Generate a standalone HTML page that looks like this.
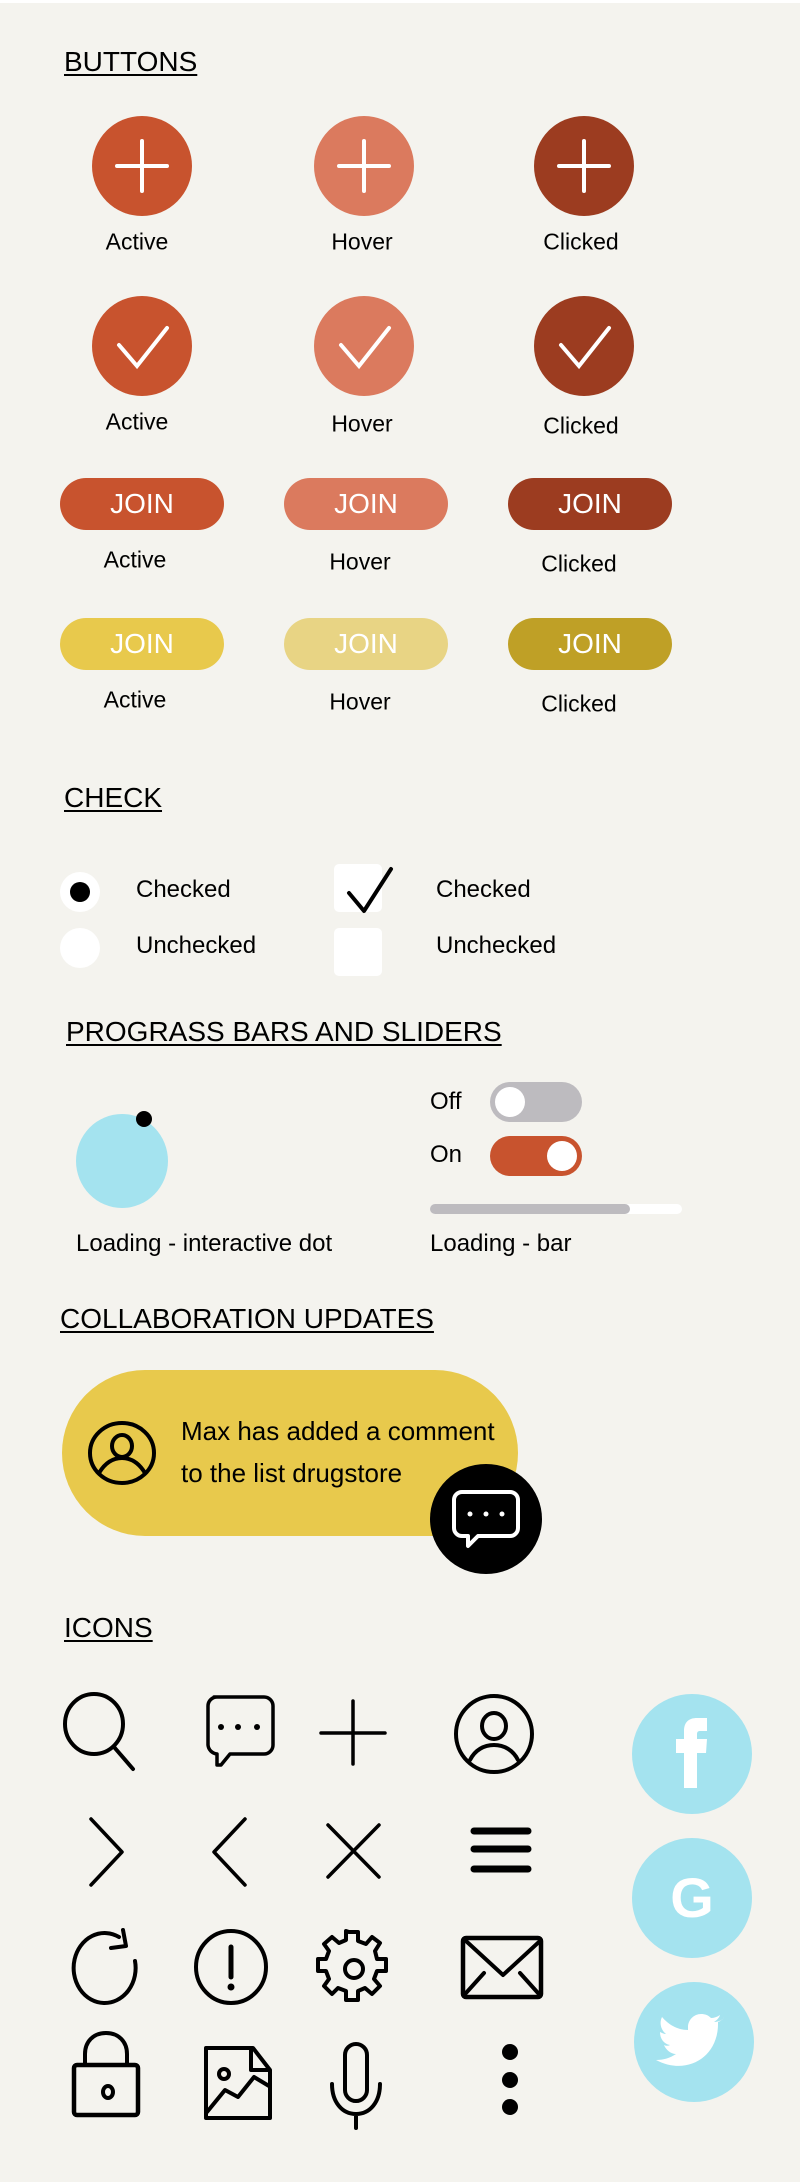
<!DOCTYPE html>
<html><head><meta charset="utf-8"><style>
*{margin:0;padding:0;box-sizing:border-box}
body{width:800px;height:2182px;background:#f4f3ee;position:relative;overflow:hidden;font-family:"Liberation Sans",Arial,sans-serif;color:#000}
.a{position:absolute}
.t{position:absolute;white-space:nowrap;line-height:1;transform:translate(-50%,-50%);font-size:23px}
.l{position:absolute;white-space:nowrap;line-height:1;transform:translateY(-50%);font-size:24px}
.h{position:absolute;white-space:nowrap;line-height:1;font-size:28px;text-decoration:underline;text-decoration-thickness:2px;text-underline-offset:3px}
.p{position:absolute;width:164px;height:52px;border-radius:26px;color:#fff;font-size:28px;display:flex;align-items:center;justify-content:center}
</style></head><body>
<div class="a" style="left:0;top:0;width:800px;height:3px;background:#fff"></div>

<div class="h" style="left:64px;top:48px">BUTTONS</div>

<svg class="a" style="left:0;top:0" width="800" height="420">
<g stroke="#fff" stroke-width="4" stroke-linecap="round" fill="none">
<circle cx="142" cy="166" r="50" fill="#c8532e" stroke="none"/>
<circle cx="364" cy="166" r="50" fill="#db7a5e" stroke="none"/>
<circle cx="584" cy="166" r="50" fill="#9c3c20" stroke="none"/>
<path d="M117 166h50M142 141v50M339 166h50M364 141v50M559 166h50M584 141v50"/>
<circle cx="142" cy="346" r="50" fill="#c8532e" stroke="none"/>
<circle cx="364" cy="346" r="50" fill="#db7a5e" stroke="none"/>
<circle cx="584" cy="346" r="50" fill="#9c3c20" stroke="none"/>
<path d="M119 345l18 21 30-38M341 345l18 21 30-38M561 345l18 21 30-38"/>
</g></svg>
<div class="t" style="left:137px;top:242px">Active</div>
<div class="t" style="left:362px;top:242px">Hover</div>
<div class="t" style="left:581px;top:242px">Clicked</div>
<div class="t" style="left:137px;top:422px">Active</div>
<div class="t" style="left:362px;top:424px">Hover</div>
<div class="t" style="left:581px;top:426px">Clicked</div>

<div class="p" style="left:60px;top:478px;background:#c8532e">JOIN</div>
<div class="p" style="left:284px;top:478px;background:#db7a5e">JOIN</div>
<div class="p" style="left:508px;top:478px;background:#9c3c20">JOIN</div>
<div class="t" style="left:135px;top:560px">Active</div>
<div class="t" style="left:360px;top:562px">Hover</div>
<div class="t" style="left:579px;top:564px">Clicked</div>
<div class="p" style="left:60px;top:618px;background:#e8c94c">JOIN</div>
<div class="p" style="left:284px;top:618px;background:#e8d484">JOIN</div>
<div class="p" style="left:508px;top:618px;background:#bfa026">JOIN</div>
<div class="t" style="left:135px;top:700px">Active</div>
<div class="t" style="left:360px;top:702px">Hover</div>
<div class="t" style="left:579px;top:704px">Clicked</div>

<div class="h" style="left:64px;top:784px">CHECK</div>
<div class="a" style="left:60px;top:872px;width:40px;height:40px;border-radius:50%;background:#fff"></div>
<div class="a" style="left:70px;top:882px;width:20px;height:20px;border-radius:50%;background:#000"></div>
<div class="a" style="left:60px;top:928px;width:40px;height:40px;border-radius:50%;background:#fff"></div>
<div class="l" style="left:136px;top:890px">Checked</div>
<div class="l" style="left:136px;top:946px">Unchecked</div>
<div class="a" style="left:334px;top:864px;width:48px;height:48px;border-radius:5px;background:#fff"></div>
<div class="a" style="left:334px;top:928px;width:48px;height:48px;border-radius:5px;background:#fff"></div>
<svg class="a" style="left:330px;top:855px" width="70" height="60"><path d="M19 38l15 18 27-42" stroke="#000" stroke-width="4" fill="none" stroke-linecap="round" stroke-linejoin="round"/></svg>
<div class="l" style="left:436px;top:890px">Checked</div>
<div class="l" style="left:436px;top:946px">Unchecked</div>

<div class="h" style="left:66px;top:1018px">PROGRASS BARS AND SLIDERS</div>
<div class="a" style="left:76px;top:1114px;width:92px;height:94px;border-radius:50%;background:#a4e3ef"></div>
<div class="a" style="left:136px;top:1111px;width:16px;height:16px;border-radius:50%;background:#000"></div>
<div class="l" style="left:76px;top:1244px">Loading - interactive dot</div>
<div class="l" style="left:430px;top:1102px">Off</div>
<div class="l" style="left:430px;top:1155px">On</div>
<div class="a" style="left:490px;top:1082px;width:92px;height:40px;border-radius:20px;background:#bdbbbf"></div>
<div class="a" style="left:495px;top:1087px;width:30px;height:30px;border-radius:50%;background:#fff"></div>
<div class="a" style="left:490px;top:1136px;width:92px;height:40px;border-radius:20px;background:#c8532e"></div>
<div class="a" style="left:547px;top:1141px;width:30px;height:30px;border-radius:50%;background:#fff"></div>
<div class="a" style="left:430px;top:1204px;width:252px;height:10px;border-radius:5px;background:#fff"></div>
<div class="a" style="left:430px;top:1204px;width:200px;height:10px;border-radius:5px;background:#bdbbbf"></div>
<div class="l" style="left:430px;top:1244px">Loading - bar</div>

<div class="h" style="left:60px;top:1305px">COLLABORATION UPDATES</div>
<div class="a" style="left:62px;top:1370px;width:456px;height:166px;border-radius:83px;background:#e8c94c"></div>
<svg class="a" style="left:86px;top:1418px" width="72" height="70"><g fill="none" stroke="#000" stroke-width="4"><ellipse cx="36" cy="35" rx="32" ry="30"/><ellipse cx="36" cy="28" rx="10" ry="11"/><path d="M13 55c6-10 14-15 23-15s17 5 23 15"/></g></svg>
<div class="l" style="left:181px;top:1431px;font-size:26px">Max has added a comment</div>
<div class="l" style="left:181px;top:1473px;font-size:26px">to the list drugstore</div>
<div class="a" style="left:430px;top:1464px;width:112px;height:110px;border-radius:50%;background:#000"></div>
<svg class="a" style="left:430px;top:1464px" width="112" height="110"><path d="M32 28h48a8 8 0 0 1 8 8v28a8 8 0 0 1-8 8H48l-10 10v-10h-6a8 8 0 0 1-8-8V36a8 8 0 0 1 8-8z" fill="none" stroke="#fff" stroke-width="4" stroke-linejoin="round"/><g fill="#fff"><circle cx="40" cy="50" r="2.5"/><circle cx="56" cy="50" r="2.5"/><circle cx="72" cy="50" r="2.5"/></g></svg>

<div class="h" style="left:64px;top:1614px">ICONS</div>
<svg class="a" style="left:0;top:1680px" width="800" height="460">
<g fill="none" stroke="#000" stroke-width="4" stroke-linecap="round" stroke-linejoin="round">
<ellipse cx="94" cy="44" rx="29" ry="30"/><path d="M114 67l19 22"/>
<path d="M214 17h50a9 9 0 0 1 9 9v39a9 9 0 0 1-9 9h-34l-9 11h-4v-11a10 10 0 0 1-9-9V26a9 9 0 0 1 9-9z" stroke-width="3.5"/>
<path d="M353 21v63M321 53h64" stroke-width="3.5"/>
<ellipse cx="494" cy="54" rx="38" ry="38"/><ellipse cx="494" cy="46" rx="12" ry="13"/><path d="M470 80c5-10 14-15 24-15s19 5 24 15"/>
<path d="M91 139l31 33-31 33M245 139l-31 33 31 33M328 145l51 52M379 145l-51 52" stroke-width="3.5"/>
<path d="M474 151h54M474 169h54M474 189h54" stroke-width="7"/>
<path d="M135 281A31 35 0 1 1 119 257"/><path d="M123 250l3 16-15 2"/>
<ellipse cx="231" cy="287" rx="35" ry="36"/><path d="M231 267v30" stroke-width="5"/><circle cx="231" cy="307" r="2" fill="#000" stroke-width="3"/>
<path d="M349 252h9v9l8 3 6-7 8 6-5 8 2 8h9v12h-9l-3 8 6 7-8 8-7-6-7 3v9h-12v-9l-8-3-6 6-8-8 5-7-3-8h-8v-12h8l3-8-5-7 8-7 7 6 7-3v-9z"/><circle cx="354" cy="289" r="9"/>
<rect x="463" y="258" width="78" height="59" rx="3" stroke-width="4.5"/><path d="M466 261l37 34 37-34M466 313l18-20M538 313l-18-20"/>
<path d="M85 385v-11c0-12 8-21 21-21s21 9 21 21v11"/><rect x="74" y="385" width="64" height="50" rx="3" stroke-width="4.5"/><ellipse cx="108" cy="412" rx="5" ry="6"/>
<path d="M206 368h47l17 22v48h-64z" stroke-width="4"/><path d="M251 369v21h18"/><circle cx="224" cy="394" r="5"/><path d="M207 432l18-22 13 7 16-20 15 9"/>
<rect x="345" y="364" width="22" height="57" rx="11"/><path d="M332 404c0 18 10 30 24 30s24-12 24-30M356 434v14"/>
</g>
<g fill="#000"><circle cx="221" cy="47" r="3"/><circle cx="238" cy="47" r="3"/><circle cx="257" cy="47" r="3"/><ellipse cx="510" cy="372" rx="8" ry="8"/><ellipse cx="510" cy="400" rx="8" ry="8"/><ellipse cx="510" cy="427" rx="8" ry="8"/></g>
<g fill="#a4e3ef"><circle cx="692" cy="74" r="60"/><circle cx="692" cy="218" r="60"/><circle cx="694" cy="362" r="60"/></g>
<path d="M684 108V73h-8V59h8v-8c0-9 5-13 13-13h10v13h-7c-2 0-3 1-3 3v5h10l-1 14h-9v35z" fill="#fff"/>
<text x="692" y="237" font-family="Liberation Sans,Arial,sans-serif" font-weight="bold" font-size="56" fill="#fff" text-anchor="middle">G</text>
<path d="M722 340c-3 1-5 2-8 2 3-2 5-4 6-7-3 2-6 3-9 3-3-3-6-4-10-4-7 0-13 6-13 13v3c-11 0-20-6-26-13-3 6-1 13 4 17-2 0-4-1-6-2 0 7 4 12 10 13-2 1-4 1-6 0 2 5 7 9 12 9-6 4-12 6-20 6 30 16 62-2 62-36v-2c3-1 5-3 6-5z" fill="#fff"/>
</svg>
</body></html>
